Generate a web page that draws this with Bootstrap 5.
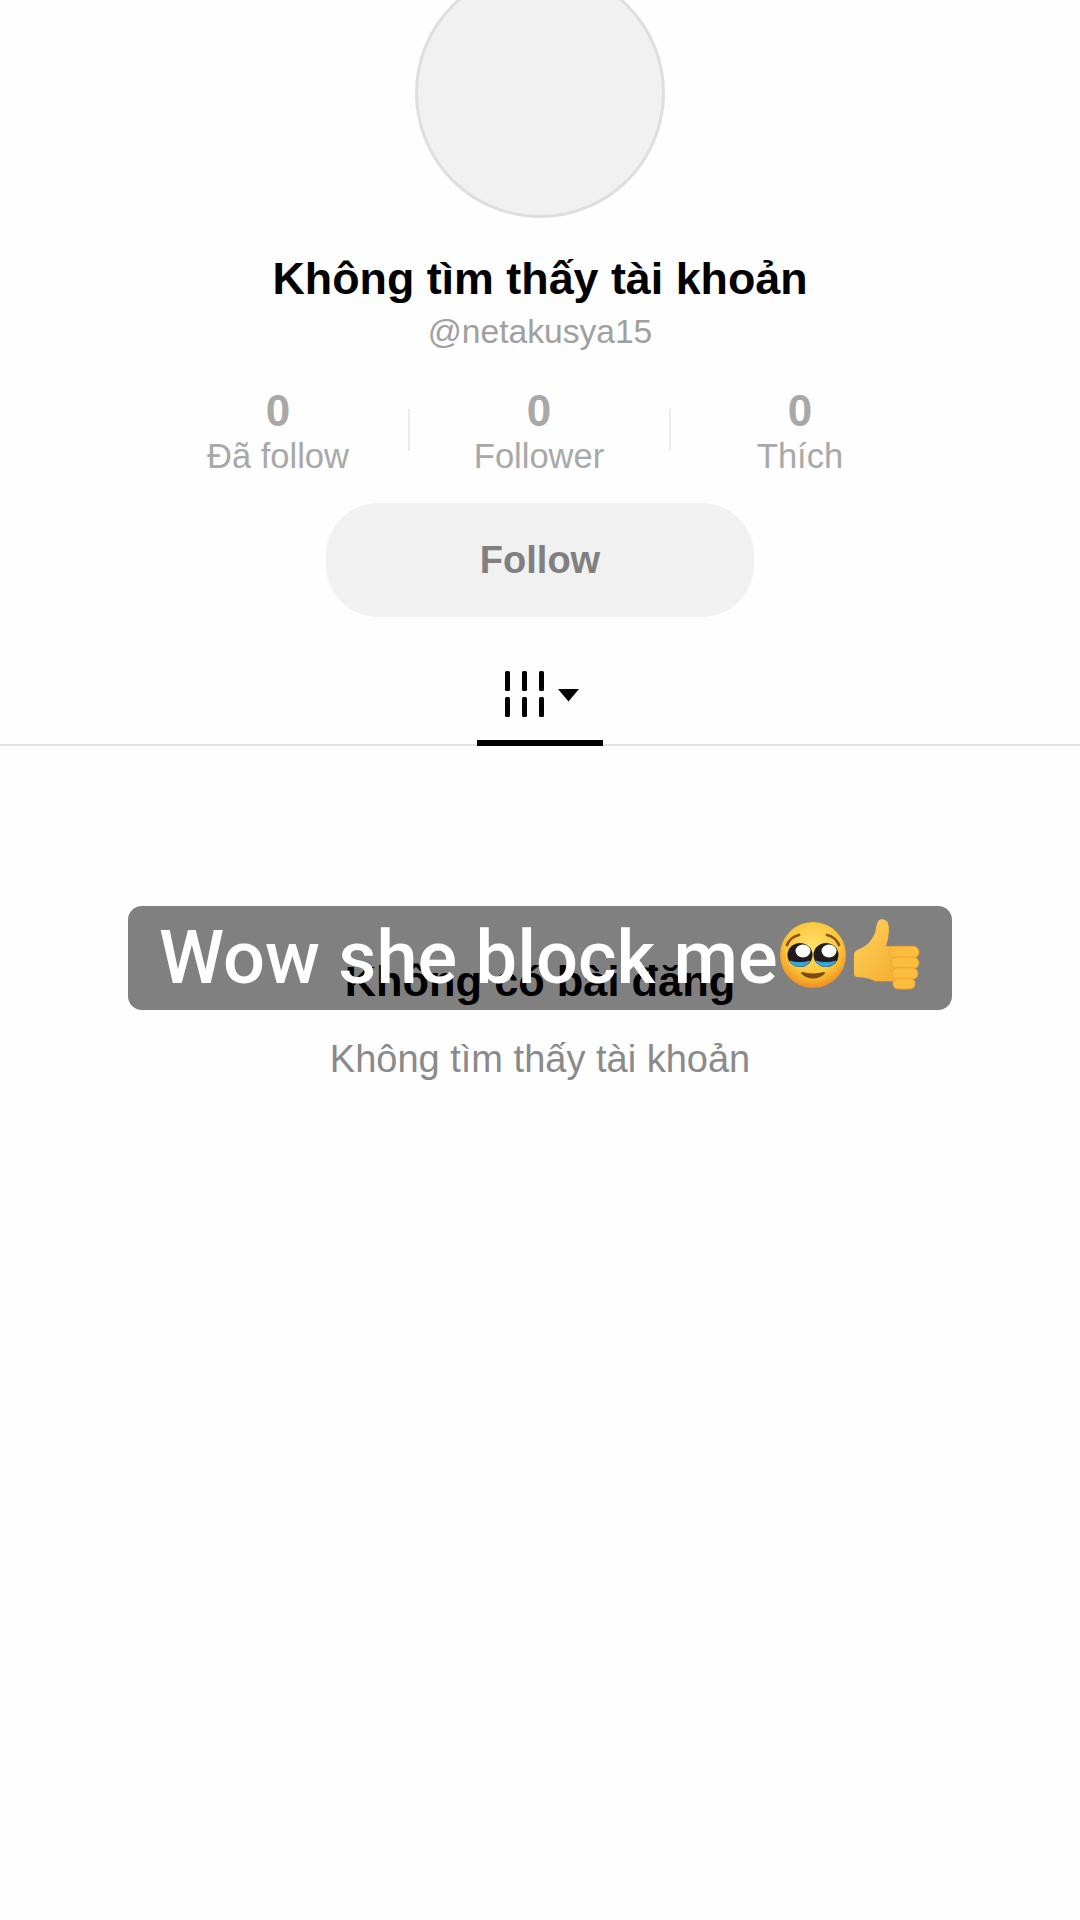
<!DOCTYPE html>
<html lang="vi">
<head>
    <meta charset="utf-8">
    <title>Không tìm thấy tài khoản</title>
    <link href="https://cdn.jsdelivr.net/npm/bootstrap@5.3.0/dist/css/bootstrap.min.css" rel="stylesheet">
    <style>
        html, body { background: #fefefe; }
        .profile-page {
            width: 1080px;
            height: 1920px;
            overflow: hidden;
            font-family: "Liberation Sans", Arial, sans-serif;
        }
        .avatar-circle {
            width: 250px;
            height: 250px;
            margin-top: -32px;
            background: #f1f1f1;
            border: 3px solid #dedede;
        }
        .profile-name { margin-top: 33px; font-size: 44.800px; line-height: 54px; font-weight: 700; color: #000; }
        .profile-handle { margin-top: 5px; font-size: 33.600px; line-height: 44px; color: #a0a0a0; }
        .stats-row { margin-top: 35px; margin-right: 2px; width: 781px; }
        .stat-cell { width: 259px; flex: none; }
        .stat-num { font-size: 44px; line-height: 44px; font-weight: 700; color: #a8a8a8; }
        .stat-label { margin-top: 1px; font-size: 34.500px; line-height: 44px; color: #a8a8a8; }
        .stat-divider { width: 2px; height: 42px; margin-top: 20px; background: #ececec; flex: none; }
        .follow-pill {
            width: 428px;
            height: 114px;
            margin-top: 25px;
            border: 0;
            border-radius: 52px;
            background: #f1f1f1;
            color: #808080;
            font-size: 38px;
            font-weight: 700;
        }
        .tab-strip { height: 129px; border-bottom: 2px solid #e2e2e2; }
        .tab-active {
            width: 126px;
            height: 69px;
            padding-top: 54px;
            border-bottom: 6px solid #000;
            margin-bottom: -2px;
            box-sizing: content-box;
        }
        /* the heading sits over the grey caption bar but under its white text */
        .empty-title {
            position: relative;
            z-index: 1;
            margin-top: 211px;
            font-size: 43.400px;
            line-height: 48px;
            font-weight: 700;
            color: #000;
        }
        .empty-text { margin-top: 30px; font-size: 38px; line-height: 48px; color: #8a8a8a; }
        .caption-box {
            position: absolute;
            top: 906px;
            left: 128px;
            width: 824px;
            height: 104px;
            padding-left: 31px;
            background: #808080;
            border-radius: 14px;
        }
        .caption-text {
            position: relative;
            z-index: 2;
            font-family: Roboto, "Liberation Sans", sans-serif;
            font-size: 74px;
            line-height: 104px;
            font-weight: 500;
            color: #fff;
            white-space: nowrap;
        }
        .caption-emoji { flex: none; position: relative; z-index: 2; margin-bottom: 6px; }
    </style>
</head>
<body class="m-0">
    <div class="profile-page position-relative d-flex flex-column align-items-center text-center">
        <div class="avatar-circle rounded-circle flex-shrink-0"></div>
        <div class="profile-name">Không tìm thấy tài khoản</div>
        <div class="profile-handle">@netakusya15</div>

        <div class="stats-row d-flex justify-content-between">
            <div class="stat-cell">
                <div class="stat-num">0</div>
                <div class="stat-label">Đã follow</div>
            </div>
            <div class="stat-divider"></div>
            <div class="stat-cell">
                <div class="stat-num">0</div>
                <div class="stat-label">Follower</div>
            </div>
            <div class="stat-divider"></div>
            <div class="stat-cell">
                <div class="stat-num">0</div>
                <div class="stat-label">Thích</div>
            </div>
        </div>

        <button type="button" class="follow-pill flex-shrink-0">Follow</button>

        <div class="tab-strip w-100 d-flex justify-content-center flex-shrink-0">
            <div class="tab-active">
                <!-- grid icon with the small dropdown arrow -->
                <svg width="126" height="50" viewBox="0 0 126 50" class="d-block">
                    <g fill="#000">
                        <rect x="28" y="0" width="5" height="20" rx="1.5"/>
                        <rect x="45" y="0" width="5" height="20" rx="1.5"/>
                        <rect x="62" y="0" width="5" height="20" rx="1.5"/>
                        <rect x="28" y="26" width="5" height="20" rx="1.5"/>
                        <rect x="45" y="26" width="5" height="20" rx="1.5"/>
                        <rect x="62" y="26" width="5" height="20" rx="1.5"/>
                        <path d="M81 18h21l-10.500 12.500z"/>
                    </g>
                </svg>
            </div>
        </div>

        <div class="empty-title">Không có bài đăng</div>
        <div class="empty-text">Không tìm thấy tài khoản</div>

        <div class="caption-box d-flex align-items-center">
            <span class="caption-text">Wow she block me</span>
            <!-- pleading face -->
            <svg class="caption-emoji" width="70" height="70" viewBox="0 0 70 70">
                <defs>
                    <radialGradient id="faceFill" cx="50%" cy="38%" r="62%">
                        <stop offset="0" stop-color="#ffe36b"/>
                        <stop offset="0.65" stop-color="#fcc63d"/>
                        <stop offset="1" stop-color="#ef8e1e"/>
                    </radialGradient>
                </defs>
                <circle cx="35" cy="35" r="33" fill="url(#faceFill)"/>
                <path d="M9 25c2-5 7-9 12-10M61 25c-2-5-7-9-12-10" fill="none" stroke="#8c5314" stroke-width="2.800" stroke-linecap="round"/>
                <ellipse cx="22" cy="35" rx="12.500" ry="12" fill="#231a1c"/>
                <ellipse cx="48" cy="35" rx="12.500" ry="12" fill="#231a1c"/>
                <ellipse cx="25" cy="31" rx="7.500" ry="6.500" fill="#fff"/>
                <ellipse cx="51" cy="31" rx="7.500" ry="6.500" fill="#fff"/>
                <path d="M12 41c3 7 16 7 20 0-5 2-15 2-20 0zM38 41c3 7 16 7 20 0-5 2-15 2-20 0z" fill="#37a6e0" stroke="#37a6e0" stroke-width="1"/>
                <path d="M24 53c6 6 16 6 22 0-6 2-16 2-22 0z" fill="#7c4a12" stroke="#7c4a12" stroke-width="2" stroke-linejoin="round"/>
            </svg>
            <!-- thumbs up -->
            <svg class="caption-emoji ms-1" width="68" height="74" viewBox="0 0 70 76">
                <defs>
                    <linearGradient id="thumbFill" x1="0" y1="0" x2="1" y2="1">
                        <stop offset="0" stop-color="#ffd35c"/>
                        <stop offset="1" stop-color="#f4a92c"/>
                    </linearGradient>
                </defs>
                <path d="M2 38c0-3 2-5 5-6 8-3 14-9 17-18 1-4 1-8 3-11 2-3 8-2 10 2 2 5 1 14-2 24h22v36H24c-4-2-10-4-17-4-3 0-5-2-5-4z" fill="url(#thumbFill)"/>
                <g fill="#fbbd3f" stroke="#ee9f25" stroke-width="0.800">
                    <rect x="38" y="29" width="31" height="12" rx="6"/>
                    <rect x="40" y="40" width="29" height="12" rx="6"/>
                    <rect x="41" y="51" width="27" height="12" rx="6"/>
                    <rect x="42" y="62" width="23" height="11" rx="5.500"/>
                </g>
            </svg>
        </div>
    </div>
    <script src="https://cdn.jsdelivr.net/npm/bootstrap@5.3.0/dist/js/bootstrap.bundle.min.js"></script>
</body>
</html>
